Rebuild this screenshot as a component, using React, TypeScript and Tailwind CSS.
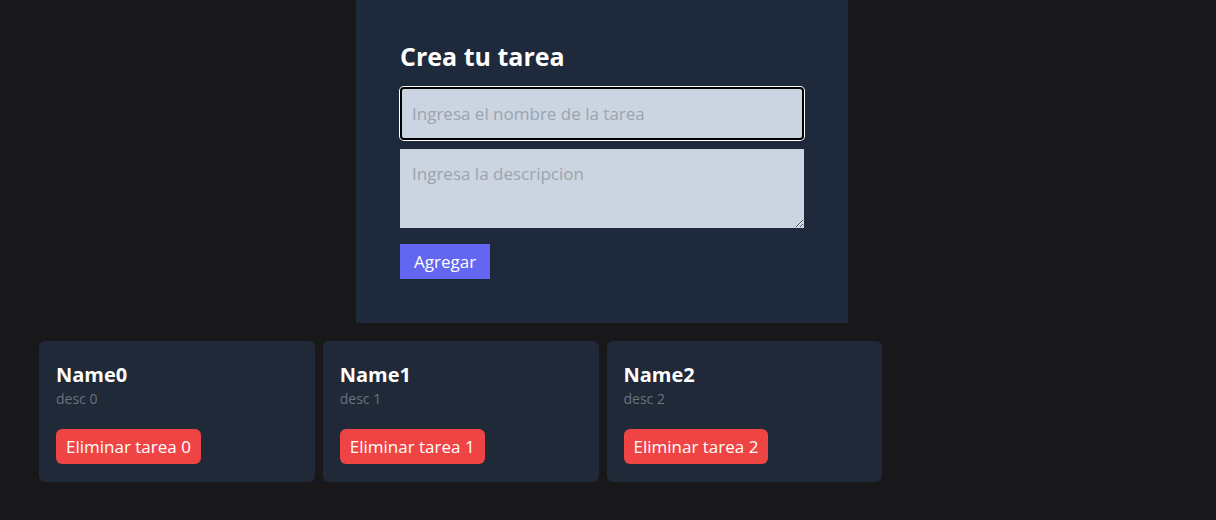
import { useState } from 'react';

interface Task {
  id: number;
  name: string;
  desc: string;
}

const TASKS: Task[] = [
  { id: 0, name: 'Name0', desc: 'desc 0' },
  { id: 1, name: 'Name1', desc: 'desc 1' },
  { id: 2, name: 'Name2', desc: 'desc 2' },
];

function TaskForm() {
  const [title, setTitle] = useState('');
  const [desc, setDesc] = useState('');

  return (
    <form
      onSubmit={(e) => e.preventDefault()}
      className="bg-[#1e293b] w-[492px] ml-[356px] px-[44px] pt-[40px] pb-[44px]"
    >
      <h1 className="text-[25px] leading-8 font-bold text-white mb-[15px]">Crea tu tarea</h1>
      <input
        autoFocus
        value={title}
        onChange={(e) => setTitle(e.target.value)}
        placeholder="Ingresa el nombre de la tarea"
        className="block w-full h-[53px] px-3 text-[17px] bg-[#cbd5e1] text-black placeholder:text-[#9ca3af] rounded-[4px] outline-none inset-ring-2 inset-ring-black shadow-[0_0_0_1px_#ffffff] caret-black"
      />
      <textarea
        value={desc}
        onChange={(e) => setDesc(e.target.value)}
        placeholder="Ingresa la descripcion"
        className="block w-full h-[79px] mt-[9px] px-3 pt-3 text-[17px] bg-[#cbd5e1] text-black placeholder:text-[#9ca3af] outline-none"
      />
      <button className="block mt-4 h-[35px] px-[14px] text-[17px] bg-[#6366f1] text-white">
        Agregar
      </button>
    </form>
  );
}

function TaskCard({ task }: { task: Task }) {
  return (
    <div className="bg-[#1f2937] rounded-md pl-[17px] pr-4 pt-5 pb-[18px]">
      <h2 className="text-xl leading-7 font-bold text-white">{task.name}</h2>
      <p className="text-sm leading-5 text-[#6b7280]">{task.desc}</p>
      <button className="mt-[20px] h-[35px] px-[10px] rounded-md bg-[#ef4444] text-[17px] text-white">
        Eliminar tarea {task.id}
      </button>
    </div>
  );
}

export default function App() {
  return (
    <div
      className="min-h-screen bg-[#18181b]"
      style={{ fontFamily: '"Open Sans", "Noto Sans", sans-serif' }}
    >
      <TaskForm />
      <div className="grid grid-cols-4 gap-2 w-[1127px] ml-[39px] mt-[18px]">
        {TASKS.map((t) => (
          <TaskCard key={t.id} task={t} />
        ))}
      </div>
    </div>
  );
}
